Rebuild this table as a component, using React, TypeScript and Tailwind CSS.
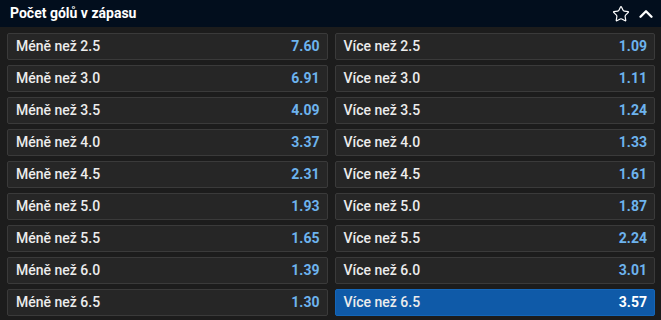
import { Fragment } from "react";
import { Star, ChevronUp } from "lucide-react";

const rows = [
  ["2.5", "7.60", "1.09"],
  ["3.0", "6.91", "1.11"],
  ["3.5", "4.09", "1.24"],
  ["4.0", "3.37", "1.33"],
  ["4.5", "2.31", "1.61"],
  ["5.0", "1.93", "1.87"],
  ["5.5", "1.65", "2.24"],
  ["6.0", "1.39", "3.01"],
  ["6.5", "1.30", "3.57"],
];

function OddButton({ label, odd, active }: { label: string; odd: string; active?: boolean }) {
  return (
    <button
      className={
        "flex h-[27px] items-center justify-between rounded-[2px] border pl-[8px] pr-[7px] text-[14px] " +
        (active ? "border-[#1466b8] bg-[#0f5aa8]" : "border-[#3a3a3a] bg-[#262626]")
      }
    >
      <span className="font-medium text-[#ececec]">{label}</span>
      <span className={"font-bold " + (active ? "text-white" : "text-[#6db3ee]")}>{odd}</span>
    </button>
  );
}

export default function App() {
  return (
    <div className="h-[320px] w-[661px] overflow-hidden bg-[#1c1c1c]" style={{ fontFamily: "Roboto, 'Liberation Sans', sans-serif" }}>
      <div className="flex h-[27px] items-center justify-between bg-[#020e1d] pl-[10px] pr-[4px]">
        <h3 className="text-[14px] font-bold text-white">Počet gólů v zápasu</h3>
        <div className="flex items-center gap-[5px] text-white">
          <Star size={18} strokeWidth={1.6} />
          <ChevronUp size={22} strokeWidth={2.6} />
        </div>
      </div>
      <div className="grid grid-cols-2 gap-x-[7px] gap-y-[5px] pl-[7px] pr-[6px] pt-[6px]">
        {rows.map(([line, under, over]) => (
          <Fragment key={line}>
            <OddButton label={"Méně než " + line} odd={under} />
            <OddButton label={"Více než " + line} odd={over} active={line === "6.5"} />
          </Fragment>
        ))}
      </div>
    </div>
  );
}
